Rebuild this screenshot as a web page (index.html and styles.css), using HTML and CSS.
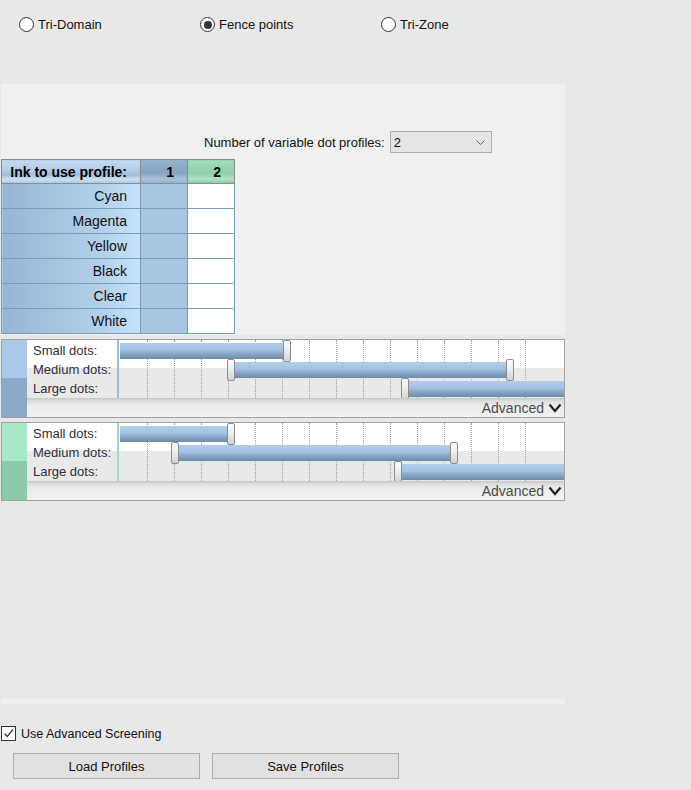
FILE: index.html
```html
<!DOCTYPE html>
<html lang="en">
<head>
    <meta charset="UTF-8">
    <title>Variable Dot Profiles</title>
    <link rel="stylesheet" href="styles.css">
</head>
<body>
    <div class="modes">
        <label class="radio"><span class="circle"></span>Tri-Domain</label>
        <label class="radio"><span class="circle checked"></span>Fence points</label>
        <label class="radio"><span class="circle"></span>Tri-Zone</label>
    </div>

    <div class="editor">
        <div class="head">
            <div class="count-row">
                <span>Number of variable dot profiles:</span>
                <div class="combo">
                    <span>2</span>
                    <svg width="9" height="5" viewBox="0 0 9 5"><polyline points="0.5,0.5 4.5,4.5 8.5,0.5" fill="none" stroke="#606060" stroke-width="1"/></svg>
                </div>
            </div>

            <table class="inks">
                <colgroup>
                    <col class="c-ink">
                    <col class="c-use">
                    <col class="c-use">
                </colgroup>
                <tr class="head-row">
                    <th class="ink-head">Ink to use profile:</th>
                    <th class="p1-head">1</th>
                    <th class="p2-head">2</th>
                </tr>
                <tr><td class="ink">Cyan</td><td class="use1"></td><td class="use2"></td></tr>
                <tr><td class="ink">Magenta</td><td class="use1"></td><td class="use2"></td></tr>
                <tr><td class="ink">Yellow</td><td class="use1"></td><td class="use2"></td></tr>
                <tr><td class="ink">Black</td><td class="use1"></td><td class="use2"></td></tr>
                <tr><td class="ink">Clear</td><td class="use1"></td><td class="use2"></td></tr>
                <tr><td class="ink">White</td><td class="use1"></td><td class="use2"></td></tr>
            </table>
        </div>

        <div class="profiles">
            <!-- profile 1 -->
            <div class="profile blue">
                <div class="strip"></div>
                <div class="pbody">
                    <div class="rows">
                        <div class="labels">
                            <div>Small dots:</div>
                            <div>Medium dots:</div>
                            <div>Large dots:</div>
                        </div>
                        <div class="track">
                            <div class="ticks">
                                <span></span><span></span><span></span><span></span><span></span>
                                <span></span><span></span><span></span><span></span><span></span>
                                <span></span><span></span><span></span><span></span><span></span>
                            </div>
                            <div class="bar r1" style="left:1px;width:163px"></div>
                            <div class="handle h1" style="left:164px"></div>
                            <div class="handle h2" style="left:108px"></div>
                            <div class="bar r2" style="left:116px;width:271px"></div>
                            <div class="handle h2" style="left:387px"></div>
                            <div class="handle h3" style="left:282px"></div>
                            <div class="bar r3" style="left:290px;width:170px"></div>
                        </div>
                    </div>
                    <div class="adv">
                        <span>Advanced</span>
                        <svg width="14" height="10" viewBox="0 0 14 10"><polyline points="1.5,1.5 7,8 12.5,1.5" fill="none" stroke="#222" stroke-width="2.2"/></svg>
                    </div>
                </div>
            </div>

            <!-- profile 2 -->
            <div class="profile green">
                <div class="strip"></div>
                <div class="pbody">
                    <div class="rows">
                        <div class="labels">
                            <div>Small dots:</div>
                            <div>Medium dots:</div>
                            <div>Large dots:</div>
                        </div>
                        <div class="track">
                            <div class="ticks">
                                <span></span><span></span><span></span><span></span><span></span>
                                <span></span><span></span><span></span><span></span><span></span>
                                <span></span><span></span><span></span><span></span><span></span>
                            </div>
                            <div class="bar r1" style="left:1px;width:107px"></div>
                            <div class="handle h1" style="left:108px"></div>
                            <div class="handle h2" style="left:52px"></div>
                            <div class="bar r2" style="left:60px;width:271px"></div>
                            <div class="handle h2" style="left:331px"></div>
                            <div class="handle h3" style="left:275px"></div>
                            <div class="bar r3" style="left:283px;width:170px"></div>
                        </div>
                    </div>
                    <div class="adv">
                        <span>Advanced</span>
                        <svg width="14" height="10" viewBox="0 0 14 10"><polyline points="1.5,1.5 7,8 12.5,1.5" fill="none" stroke="#222" stroke-width="2.2"/></svg>
                    </div>
                </div>
            </div>
        </div>
    </div>

    <label class="check">
        <span class="box">
            <svg width="13" height="13" viewBox="0 0 13 13"><polyline points="2.5,6.5 5.2,9.5 11,2.5" fill="none" stroke="#333" stroke-width="1.2"/></svg>
        </span>
        Use Advanced Screening
    </label>

    <div class="actions">
        <button class="btn">Load Profiles</button>
        <button class="btn">Save Profiles</button>
    </div>
</body>
</html>
```

FILE: styles.css
```css
body {
    margin: 0;
    width: 691px;
    background: #e8e8e8;
    font-family: "Liberation Sans", Arial, sans-serif;
    font-size: 13px;
    color: #000;
}

/* mode radios */
.modes {
    display: flex;
    height: 84px;
    box-sizing: border-box;
    padding: 17px 0 0 19px;
}
.radio {
    display: flex;
    align-items: center;
    gap: 4px;
    width: 181px;
    height: 15px;
    color: #111;
}
.circle {
    width: 13px;
    height: 13px;
    border: 1px solid #333;
    border-radius: 50%;
    background: #fff;
    display: flex;
    align-items: center;
    justify-content: center;
}
.circle.checked::after {
    content: "";
    width: 8px;
    height: 8px;
    border-radius: 50%;
    background: #333;
}

/* editor panel */
.editor {
    margin-left: 1px;
    width: 564px;
    background: #f0f0f0;
    padding-bottom: 5px;
}
.head {
    height: 251px;
    box-sizing: border-box;
    padding-top: 47px;
}
.count-row {
    display: flex;
    align-items: center;
    gap: 5px;
    height: 22px;
    padding-left: 203px;
    color: #111;
}
.combo {
    width: 102px;
    height: 22px;
    box-sizing: border-box;
    border: 1px solid #adadad;
    background: #e5e5e5;
    display: flex;
    align-items: center;
    justify-content: space-between;
    padding: 0 6px 0 3px;
}

.inks {
    margin-top: 6px;
    border-collapse: collapse;
    table-layout: fixed;
    width: 234px;
    font-size: 14px;
}
.c-ink {
    width: 139px;
}
.c-use {
    width: 47px;
}
.inks th {
    height: 23px;
    padding: 0 13px 0 0;
    text-align: right;
    font-weight: bold;
    border: 1px solid #8c8c8c;
}
.inks td {
    height: 24px;
    padding: 0 13px 0 0;
    text-align: right;
    border: 1px solid #7b9bbb;
}
.ink-head {
    background: linear-gradient(#c4dbef 0%, #b2cce6 45%, #9fbcd9 62%, #cfe1f2 82%, #a8c4df 100%);
}
.p1-head {
    background: linear-gradient(#94b1cd 0%, #86a4c2 55%, #a9c3dc 82%, #90aecb 100%);
}
.p2-head {
    background: linear-gradient(#a6dcbf 0%, #8acfa9 55%, #b3e3c8 82%, #7fc49e 100%);
}
.ink {
    background: linear-gradient(to right, #97b5d3 0%, #b2cfea 70%, #c6e2fa 100%);
    color: #111;
}
.use1 {
    background: #a8c6e2;
}
.use2 {
    background: #fff;
}

/* dot profiles */
.profiles {
    height: 364px;
    box-sizing: border-box;
    padding-top: 4px;
    background: #e8e8e8;
}
.profile {
    display: flex;
    height: 79px;
    box-sizing: border-box;
    border: 1px solid #a0a0a0;
    margin-bottom: 4px;
    background: #fff;
}
.strip {
    width: 25px;
    flex: none;
}
.blue .strip {
    background: linear-gradient(#a9c9e9 0 38px, #8aaac8 38px);
}
.green .strip {
    background: linear-gradient(#a9e7c9 0 38px, #8ccaa9 38px);
}
.pbody {
    flex: 1;
    display: flex;
    flex-direction: column;
}
.rows {
    display: flex;
    height: 58px;
    background: linear-gradient(#fff 0 28px, #e9e9e9 28px);
}
.labels {
    width: 84px;
    padding: 1px 0 0 6px;
    color: #302c40;
    line-height: 19px;
}
.track {
    flex: 1;
    position: relative;
    overflow: hidden;
}
.blue .track {
    border-left: 2px solid #9dbcdc;
}
.green .track {
    border-left: 2px solid #9edcbd;
}
.ticks {
    position: absolute;
    top: 0;
    bottom: 0;
    left: 0;
    display: flex;
    padding-left: 28px;
}
.ticks span {
    width: 27px;
    flex: none;
    box-sizing: border-box;
    border-left: 1px dotted #a0a0a0;
}
.bar {
    position: absolute;
    height: 16px;
    background: linear-gradient(#b1cdea 0%, #a4c2e0 45%, #8dabca 62%, #6c8baa 100%);
}
.r1 { top: 3px; }
.r2 { top: 22px; }
.r3 { top: 41px; }
.handle {
    position: absolute;
    width: 8px;
    height: 22px;
    box-sizing: border-box;
    border: 1px solid #8c8c8c;
    border-radius: 2px;
    background: linear-gradient(#fcfcfc 0%, #eeeeee 45%, #d2d2d2 100%);
    z-index: 1;
}
.h1 { top: 0; }
.h2 { top: 19px; }
.h3 { top: 38px; }

.adv {
    height: 19px;
    display: flex;
    align-items: center;
    justify-content: flex-end;
    gap: 4px;
    padding-right: 2px;
    font-size: 14px;
    color: #4a4a4a;
    background: linear-gradient(#c6c6c6 0, #dedede 3px, #ececec 8px, #f2f2f2 100%);
}

/* bottom options */
.check {
    display: flex;
    align-items: center;
    gap: 5px;
    margin: 22px 0 0 1px;
    height: 15px;
    font-size: 12.5px;
    color: #111;
}
.box {
    width: 15px;
    height: 15px;
    box-sizing: border-box;
    border: 1px solid #333;
    background: #fff;
    display: flex;
    align-items: center;
    justify-content: center;
}
.actions {
    display: flex;
    gap: 12px;
    margin-top: 12px;
    padding-left: 13px;
}
.btn {
    width: 187px;
    height: 26px;
    border: 1px solid #adadad;
    background: #e1e1e1;
    font-family: "Liberation Sans", Arial, sans-serif;
    font-size: 13px;
    color: #111;
    padding: 0;
}
```
